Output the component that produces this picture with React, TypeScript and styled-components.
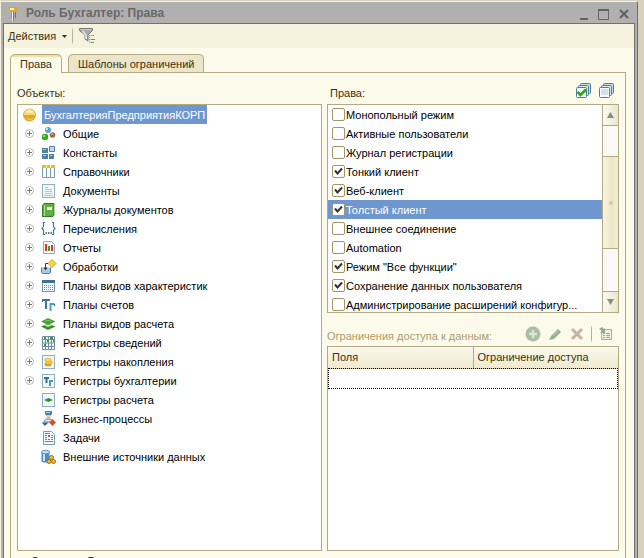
import React, { useState } from "react";
import styled, { createGlobalStyle, css } from "styled-components";

const line = "#b3aa83";
const cream = "#fcfaeb";
const ink = "#3f3109";
const highlight = "#6f97cf";

const GlobalStyle = createGlobalStyle`
  *, *::before, *::after { box-sizing: border-box; }
  body {
    margin: 0;
    background: #d8d1bd;
    font-family: "Liberation Sans", Arial, sans-serif;
    font-size: 11px;
    line-height: 13px;
    color: ${ink};
  }
  button, input { font: inherit; color: inherit; margin: 0; }
`;

const Desktop = styled.div`
  height: 100vh;
  overflow: hidden;
  display: flex;
  padding: 1px 6px 0 0;
  border-left: 1px solid #f3f0df;
`;

const Window = styled.main`
  flex: 1;
  min-width: 0;
  display: flex;
  flex-direction: column;
  background: #b0b0b0;
  border-top: 1px solid #f6f3e6;
  border-right: 1px solid #6d6d6d;
  padding: 0 2px;
`;

const TitleBar = styled.header`
  flex: none;
  height: 21px;
  display: flex;
  align-items: center;
  gap: 4px;
  padding: 2px 0 0 3px;
`;

const Title = styled.h1`
  flex: 1;
  margin: 0;
  font-size: 12px;
  line-height: 15px;
  font-weight: bold;
  color: #686868;
`;

const IconButton = styled.button`
  display: flex;
  align-items: center;
  justify-content: center;
  width: 16px;
  height: 16px;
  padding: 0;
  border: 0;
  background: none;
`;

const WindowControls = styled.div`
  display: flex;
  gap: 4px;
  padding-right: 3px;
`;

const Client = styled.div`
  flex: 1;
  min-height: 0;
  display: flex;
  flex-direction: column;
  background: ${cream};
  border: 1px solid #707070;
  border-bottom: 0;
`;

const Toolbar = styled.div`
  flex: none;
  height: 24px;
  display: flex;
  align-items: center;
  background: #f5f2de;
  padding-left: 4px;
`;

const MenuButton = styled.button`
  display: flex;
  align-items: center;
  gap: 6px;
  padding: 0;
  border: 0;
  background: none;
`;

const Divider = styled.span`
  width: 1px;
  height: 18px;
  background: linear-gradient(transparent, #b9b18c 20% 80%, transparent);
`;

const ToolbarDivider = styled(Divider)`
  margin: 0 6px 0 5px;
`;

const Tabs = styled.div`
  flex: none;
  display: flex;
  align-items: flex-end;
  gap: 6px;
  padding: 6px 7px 0 6px;
`;

const Tab = styled.button<{ $active: boolean }>`
  height: 18px;
  padding: 1px 9px 0;
  border: 1px solid ${line};
  border-bottom: 0;
  border-radius: 5px 5px 0 0;
  background: #ebe5cc;
  ${(p) =>
    p.$active &&
    css`
      height: 19px;
      margin-bottom: -1px;
      background: linear-gradient(#f8dda4 0 2px, ${cream} 2px);
      position: relative;
    `}
`;

const Panel = styled.section`
  flex: 1;
  min-height: 0;
  display: flex;
  flex-direction: column;
  margin: 0 8px 0 6px;
  padding: 9px 6px 0;
  border: 1px solid ${line};
  border-bottom: 0;
`;

const Columns = styled.div`
  flex: 1;
  min-height: 0;
  display: grid;
  grid-template-columns: 305fr 292fr;
  gap: 5px;
`;

const Column = styled.div`
  display: flex;
  flex-direction: column;
  min-width: 0;
  min-height: 0;
`;

const CaptionRow = styled.div`
  flex: none;
  height: 22px;
  display: flex;
  align-items: center;
  justify-content: space-between;
`;

const Caption = styled.h2<{ $muted?: boolean; $inset?: boolean }>`
  margin: 0;
  font-size: 11px;
  line-height: 13px;
  font-weight: normal;
  padding-left: ${(p) => (p.$inset ? "3px" : "0")};
  color: ${(p) => (p.$muted ? "#ae9b68" : ink)};
`;

const CaptionTools = styled.div`
  display: flex;
  gap: 7px;
  align-items: center;
  padding: 0 5px 4px 0;
`;

const Box = styled.div`
  flex: 1;
  min-height: 0;
  overflow: hidden;
  background: #fff;
  border: 1px solid ${line};
`;

const Tree = styled.ul`
  list-style: none;
  margin: 0;
  padding: 0;
  color: #000;
`;

const TreeRow = styled.li<{ $root?: boolean }>`
  height: 19px;
  display: flex;
  align-items: center;
  padding-left: ${(p) => (p.$root ? "4px" : "7px")};
`;

const Toggle = styled.button`
  width: 9px;
  height: 9px;
  margin-right: 7px;
  padding: 0;
  border: 0;
  background: none;
  display: flex;
`;

const ToggleGap = styled.span`
  width: 16px;
`;

const TreeLabel = styled.span<{ $selected?: boolean }>`
  display: flex;
  align-items: center;
  height: 19px;
  padding: 1px 2px 0;
  margin-left: 4px;
  color: ${(p) => (p.$selected ? "#fff" : "#000")};
  background: ${(p) => (p.$selected ? highlight : "transparent")};
`;

const RightsBox = styled(Box)`
  flex: none;
  height: 209px;
  display: flex;
`;

const RightsList = styled.ul`
  flex: 1;
  min-width: 0;
  list-style: none;
  margin: 0;
  padding: 0;
`;

const RightRow = styled.li<{ $selected: boolean }>`
  height: 19px;
  padding-left: 4px;
  color: ${(p) => (p.$selected ? "#fff" : "#000")};
  background: ${(p) => (p.$selected ? highlight : "transparent")};
`;

const RightLabel = styled.label`
  display: flex;
  align-items: center;
  height: 19px;
  gap: 1px;
`;

const RightName = styled.span`
  padding-top: 1px;
`;

const CheckWrap = styled.span`
  position: relative;
  width: 13px;
  height: 13px;
  display: flex;
`;

const CheckInput = styled.input`
  appearance: none;
  width: 13px;
  height: 13px;
  border: 1px solid #a0966c;
  border-radius: 2px;
  background: #fff;
  & + svg { display: none; }
  &:checked + svg { display: block; }
`;

const CheckMark = styled.svg`
  position: absolute;
  inset: 0;
  pointer-events: none;
`;

const ScrollBar = styled.div`
  width: 16px;
  display: flex;
  flex-direction: column;
  border-left: 1px solid ${line};
  background: #faf9f5;
`;

const ScrollButton = styled.button`
  flex: none;
  height: 20px;
  padding: 0;
  border: 0;
  display: flex;
  align-items: center;
  justify-content: center;
  background: linear-gradient(90deg, #fbfaf0, #ebe6cd);
`;

const ScrollTrack = styled.div`
  flex: 1;
  display: grid;
  grid-template-rows: 30fr 94fr 42fr;
  border: solid ${line};
  border-width: 1px 0;
`;

const ScrollThumb = styled.div`
  grid-row: 2;
  display: flex;
  align-items: center;
  justify-content: center;
  border: solid ${line};
  border-width: 1px 0;
  background: linear-gradient(90deg, #f7f4e2, #ebe5c6 60%, #f1edda);
`;

const Grip = styled.span`
  width: 4px;
  height: 4px;
  border-radius: 2px;
  background: #d5cda8;
`;

const LimitsHeader = styled.div`
  flex: none;
  height: 33px;
  display: flex;
  align-items: center;
  justify-content: space-between;
  padding-top: 14px;
`;

const LimitsTools = styled.div`
  display: flex;
  align-items: center;
  gap: 6px;
  padding: 0 5px 6px 0;
`;

const LimitsTable = styled.table`
  width: 100%;
  table-layout: fixed;
  border-collapse: collapse;
  th {
    height: 21px;
    padding: 0 4px;
    text-align: left;
    font-weight: normal;
    background: linear-gradient(#faf8ec, #f0ead0);
    border-bottom: 1px solid #d8d0ac;
  }
  th + th { border-left: 1px solid ${line}; }
  td {
    height: 21px;
    padding: 0;
    outline: 1px dotted #000;
    outline-offset: -1px;
  }
`;

const Footer = styled.h2`
  flex: none;
  height: 7px;
  margin: 0;
  padding: 4px 0 0 14px;
  font-size: 11px;
  line-height: 13px;
  overflow: hidden;
`;

const Svg = ({ size = 16, children }: { size?: number; children: React.ReactNode }) => (
  <svg width={size} height={size} viewBox={`0 0 ${size} ${size}`} fill="none" aria-hidden="true">
    {children}
  </svg>
);

const KeyIcon = () => (
  <Svg>
    <path d="M3 1h8l1 1-1 3-2 1H5L3 5 2 2z" fill="#dda92c" />
    <path d="M4 2h4v2H4z" fill="#fff0a8" />
    <path d="M6.500 6v9" stroke="#f0f0f0" />
    <path d="M7.500 6v9M9.500 6v6" stroke="#777" />
    <path d="M5.500 6v6" stroke="#999" />
  </Svg>
);

const FilterIcon = () => (
  <Svg>
    <path d="M.5.500h13v2L9 7v6l-3-2V7L.5 2.500z" fill="#a8a8a8" stroke="#777" />
    <path d="M1.500 1.500h11" stroke="#c8c8c8" />
    <path d="M3.500 3 7 7v4" stroke="#eee" strokeWidth="1.500" />
    <path d="M10.500 7v8M10.500 7.500h2M10.500 11.500h2M10.500 14.500h2" stroke="#aa9f78" strokeDasharray="1 1" />
    <path d="M12 7.500h3" stroke="#c0a24b" />
    <path d="M12 11.500h4" stroke="#458cc4" />
    <path d="M12 14.500h3" stroke="#55a64a" />
  </Svg>
);

const Stack = ({ checked }: { checked?: boolean }) => (
  <Svg>
    <rect x="5.500" y=".5" width="10" height="10" rx="1" fill="#c5dbe8" stroke="#527f9d" />
    <rect x="3.500" y="2.500" width="10" height="10" rx="1" fill="#d4e4ee" stroke="#527f9d" />
    <rect x="1.500" y="4.500" width="10" height="10" rx="1" fill={checked ? "#eff7ec" : "#f8fbfd"} stroke="#527f9d" />
    {checked ? (
      <path d="m2.500 9 3 3L11 6.500" stroke="#34a01c" strokeWidth="2.600" />
    ) : (
      <path d="M3 6h7v6H3z" fill="#d2e2ed" />
    )}
  </Svg>
);

const PlusIcon = () => (
  <Svg size={9}>
    <circle cx="4.500" cy="4.500" r="4" fill="#fff" stroke="#b8b8b8" />
    <path d="M2 4.500h5M4.500 2v5" stroke="#777" />
  </Svg>
);

const sheet = <rect x="1.500" y="1.500" width="12" height="13" fill="#f2f7fa" stroke="#91afc1" />;

const icons: Record<string, React.ReactNode> = {
  root: (
    <>
      <circle cx="7.500" cy="8" r="6.500" fill="#e9b22b" />
      <path d="M1.500 8a6 6 0 0 0 12 0z" fill="#e2a827" />
      <path d="M2.500 10c2 4 8 4 10 0-2 2-8 2-10 0z" fill="#f3c95a" />
      <path d="M2 8c0-8 11-8 11 0z" fill="#f8d878" />
      <path d="M4 5.500c1-3 6-3 7 0z" fill="#fff4c8" />
    </>
  ),
  common: (
    <>
      <circle cx="7" cy="4" r="3" fill="#5ba0d8" />
      <circle cx="6" cy="3" r="1.200" fill="#c0e0f7" />
      <circle cx="4" cy="11" r="3.200" fill="#38a51c" />
      <circle cx="3.200" cy="10" r="1.200" fill="#96dd78" />
      <circle cx="11.500" cy="9" r="2.800" fill="#a06a46" />
      <circle cx="11" cy="8" r="1" fill="#ddb293" />
    </>
  ),
  constants: (
    <>
      <path d="M1 3h6v5H1zM1 9h6v5H1zM8 9h5v5H8z" fill="#4f82a6" />
      <path d="M8.500 1.500h5v5h-5z" fill="#bcd9ea" stroke="#4f82a6" />
      <path d="M2 4h3v1H2zM2 10h3v1H2zM9 10h2v1H9z" fill="#a9cbe0" />
    </>
  ),
  catalogs: (
    <>
      <path d="M1.500 2.500h12v11h-12zM5.500 2v12M9.500 2v12" fill="#f7fafb" stroke="#7f9cae" />
      <path d="M1 1h13v3H1z" fill="#efbd18" />
      <path d="M5.500 1v3M9.500 1v3" stroke="#fff1b0" />
    </>
  ),
  documents: (
    <>
      {sheet}
      <path d="M4 4.500h3M4 6.500h7M4 8.500h7M4 10.500h7M3 12.500h9" stroke="#afc6d3" />
    </>
  ),
  journals: (
    <>
      <path d="M1.500 3.500 3 1.500h10v11l-1 2H1.500z" fill="#65ad43" stroke="#2f7c26" />
      <path d="M3.500 3v11" stroke="#a9df89" />
      <path d="M6 5h5v3H6z" fill="#e7f4dc" />
      <path d="M13.500 3v9" stroke="#b7d9a8" />
    </>
  ),
  enums: (
    <>
      <path d="M4 1.500H2.500v4L1 7.500 2.500 9v4.500H4M11 1.500h1.500v4L14 7.500 12.500 9v4.500H11" stroke="#4b7890" strokeWidth="1.200" />
      <path d="M4.500 12H6M7 12h1.500M9.500 12H11" stroke="#2e566d" strokeWidth="1.400" />
    </>
  ),
  reports: (
    <>
      <path d="M2.500 1.500h8l3 3v9h-11z" fill="#f3f8fb" stroke="#91afc1" />
      <path d="M4 4h2v7H4z" fill="#d3382c" />
      <path d="M7 6h2v5H7z" fill="#459b36" />
      <path d="M10 5h2v6h-2z" fill="#d3382c" />
    </>
  ),
  processing: (
    <>
      <path d="M.5 8.500v5l1 1h7l1-1v-5" fill="#a9cce2" stroke="#4581a8" />
      <path d="m11 .5 4 4-4 4-4-4z" fill="#f9d548" stroke="#d4a21a" />
      <path d="M7 4.500H4.500V9" stroke="#333" />
      <path d="M2.500 8.500h4l-2 3z" fill="#333" />
    </>
  ),
  characteristics: (
    <>
      <rect x="1.500" y="2.500" width="12" height="11" fill="#f0f6f9" stroke="#7797ac" />
      <path d="M1 2h13v3H1z" fill="#3f7290" />
      <path d="M3 7.500h9M3 9.500h9M3 11.500h9" stroke="#7594a8" strokeDasharray="1 1" />
    </>
  ),
  accounts: (
    <>
      <path d="M1 3h8M5 3v9" stroke="#3979a6" strokeWidth="2" />
      <path d="M9.500 14V7h4" stroke="#5b9ac2" strokeWidth="2" />
      <path d="M1.500 3v2M13.500 7v2" stroke="#3979a6" />
    </>
  ),
  calculation: (
    <>
      <path d="m0 10.500 7-3 7.500 3L7 14z" fill="#3c8b2d" />
      <path d="M2 8.500h10L7 11z" fill="#d7ebc9" />
      <path d="m0 5.500 7-3.500 7.500 3.500L7 9z" fill="#49a036" />
      <path d="m3 5.300 4-2 4 2z" fill="#70bd57" />
    </>
  ),
  info: (
    <>
      <path d="M1.500 1.500h12v13h-12zM1 4.500h13M1 8h13M1 11.500h13M4.500 2v13M7.500 2v13M10.500 2v13" fill="#f4f8fa" stroke="#6f92a7" />
      <path d="M3 2h2v2H3zM9 2h3v2H9zM6 5h2v2H6zM12 5h1v2h-1zM3 9h2v2H3z" fill="#429632" />
    </>
  ),
  accumulation: (
    <>
      {sheet}
      <ellipse cx="7" cy="10.500" rx="3.500" ry="1.800" fill="#df981a" />
      <ellipse cx="8" cy="8.500" rx="3.500" ry="1.800" fill="#f8cc3b" stroke="#d99a24" strokeWidth=".6" />
      <ellipse cx="7" cy="6" rx="3.500" ry="1.800" fill="#fbda60" stroke="#d99a24" strokeWidth=".6" />
    </>
  ),
  accounting: (
    <>
      {sheet}
      <path d="M3 5h5M5.500 5v5" stroke="#316e9a" strokeWidth="2" />
      <path d="M9 13V8h3" stroke="#5995bc" strokeWidth="2" />
    </>
  ),
  calcRegister: (
    <>
      {sheet}
      <path d="m3 8 4.500-2L12 8l-4.500 2z" fill="#398b29" />
    </>
  ),
  business: (
    <>
      <path d="M4 0h7v3L9 5H6L4 3z" fill="#3e83b5" />
      <path d="M5 1h4v1H5z" fill="#b8dbef" />
      <circle cx="7.500" cy="6" r="2.200" fill="#f0c594" />
      <path d="M3 11c0-4 9-4 9 0z" fill="#dbe7ee" stroke="#6d899b" />
      <path d="M.5 11.500h7L4 15z" fill="#436781" />
      <path d="m11.500 8 3.500 3.500-3.500 3.500L8 11.500z" fill="#e04f2e" />
    </>
  ),
  tasks: (
    <>
      <path d="M2.500 1.500h8l3 3v10h-11z" fill="#f5f8fa" stroke="#7d99aa" />
      <path d="M4 3.500h5M4 5.500h2M10 5.500h2M4 7.500h2M10 7.500h2M4 9.500h2M10 9.500h2M4 11.500h8" stroke="#67889e" />
      <path d="M7 5h2v2H7zM7 9h2v1H7z" fill="#bf5b4e" />
    </>
  ),
  external: (
    <>
      <path d="M.5 3v9c0 2 8 2 8 0V3z" fill="#4f8fbb" />
      <path d="M2 3h2v9H2z" fill="#c8e3f3" />
      <ellipse cx="4.500" cy="3" rx="4" ry="1.800" fill="#c4dfef" stroke="#5792b8" />
      <g fill="#f2bd2d" stroke="#a16b12">
        <circle cx="10.500" cy="8.500" r="2" />
        <circle cx="8" cy="12.500" r="2" />
        <circle cx="12.500" cy="12.500" r="2" />
      </g>
    </>
  ),
};

const branches: [string, string, boolean][] = [
  ["Общие", "common", true],
  ["Константы", "constants", true],
  ["Справочники", "catalogs", true],
  ["Документы", "documents", true],
  ["Журналы документов", "journals", true],
  ["Перечисления", "enums", true],
  ["Отчеты", "reports", true],
  ["Обработки", "processing", true],
  ["Планы видов характеристик", "characteristics", true],
  ["Планы счетов", "accounts", true],
  ["Планы видов расчета", "calculation", true],
  ["Регистры сведений", "info", true],
  ["Регистры накопления", "accumulation", true],
  ["Регистры бухгалтерии", "accounting", true],
  ["Регистры расчета", "calcRegister", false],
  ["Бизнес-процессы", "business", false],
  ["Задачи", "tasks", false],
  ["Внешние источники данных", "external", false],
];

const rights: [string, boolean][] = [
  ["Монопольный режим", false],
  ["Активные пользователи", false],
  ["Журнал регистрации", false],
  ["Тонкий клиент", true],
  ["Веб-клиент", true],
  ["Толстый клиент", true],
  ["Внешнее соединение", false],
  ["Automation", false],
  ['Режим "Все функции"', true],
  ["Сохранение данных пользователя", true],
  ["Администрирование расширений конфигур...", false],
];

export default function App() {
  const [tab, setTab] = useState(0);
  const [selected, setSelected] = useState(5);

  return (
    <Desktop>
      <GlobalStyle />
      <Window>
        <TitleBar>
          <KeyIcon />
          <Title>Роль Бухгалтер: Права</Title>
          <WindowControls>
            <IconButton aria-label="Свернуть">
              <Svg><path d="M4 13h8" stroke="#646464" strokeWidth="2" /></Svg>
            </IconButton>
            <IconButton aria-label="Развернуть">
              <Svg><path d="M2.500 3v10.500h10V3" stroke="#646464" /><path d="M2 4h11" stroke="#646464" strokeWidth="2" /></Svg>
            </IconButton>
            <IconButton aria-label="Закрыть">
              <Svg><path d="m4 4 8 8m0-8-8 8" stroke="#646464" strokeWidth="2.200" /></Svg>
            </IconButton>
          </WindowControls>
        </TitleBar>
        <Client>
          <Toolbar>
            <MenuButton>
              Действия
              <svg width="5" height="3" viewBox="0 0 5 3" aria-hidden="true"><path d="M0 0h5L2.500 3z" fill={ink} /></svg>
            </MenuButton>
            <ToolbarDivider />
            <IconButton aria-label="Отбор"><FilterIcon /></IconButton>
          </Toolbar>
          <Tabs role="tablist">
            {["Права", "Шаблоны ограничений"].map((name, i) => (
              <Tab key={name} role="tab" aria-selected={tab === i} $active={tab === i} onClick={() => setTab(i)}>
                {name}
              </Tab>
            ))}
          </Tabs>
          <Panel role="tabpanel">
            <Columns>
              <Column>
                <CaptionRow><Caption>Объекты:</Caption></CaptionRow>
                <Box>
                  <Tree>
                    <TreeRow $root>
                      <Svg>{icons.root}</Svg>
                      <TreeLabel $selected>БухгалтерияПредприятияКОРП</TreeLabel>
                    </TreeRow>
                    {branches.map(([name, icon, expandable]) => (
                      <TreeRow key={name}>
                        {expandable ? <Toggle aria-label={`Развернуть: ${name}`}><PlusIcon /></Toggle> : <ToggleGap />}
                        <Svg>{icons[icon]}</Svg>
                        <TreeLabel>{name}</TreeLabel>
                      </TreeRow>
                    ))}
                  </Tree>
                </Box>
              </Column>
              <Column>
                <CaptionRow>
                  <Caption $inset>Права:</Caption>
                  <CaptionTools>
                    <IconButton aria-label="Отметить все"><Stack checked /></IconButton>
                    <IconButton aria-label="Снять все отметки"><Stack /></IconButton>
                  </CaptionTools>
                </CaptionRow>
                <RightsBox>
                  <RightsList>
                    {rights.map(([name, on], i) => (
                      <RightRow key={name} $selected={selected === i} onClick={() => setSelected(i)}>
                        <RightLabel>
                          <CheckWrap>
                            <CheckInput type="checkbox" defaultChecked={on} />
                            <CheckMark width="13" height="13" viewBox="0 0 13 13" fill="none">
                              <path d="m3 5.500 2.500 3 4.500-5" stroke="#333" strokeWidth="2" />
                            </CheckMark>
                          </CheckWrap>
                          <RightName>{name}</RightName>
                        </RightLabel>
                      </RightRow>
                    ))}
                  </RightsList>
                  <ScrollBar>
                    <ScrollButton aria-label="Вверх">
                      <svg width="7" height="6" viewBox="0 0 7 6"><path d="M0 6h7L3.500 0z" fill="#8c8c84" /></svg>
                    </ScrollButton>
                    <ScrollTrack><ScrollThumb><Grip /></ScrollThumb></ScrollTrack>
                    <ScrollButton aria-label="Вниз">
                      <svg width="7" height="6" viewBox="0 0 7 6"><path d="M0 0h7L3.500 6z" fill="#8c8c84" /></svg>
                    </ScrollButton>
                  </ScrollBar>
                </RightsBox>
                <LimitsHeader>
                  <Caption $muted>Ограничения доступа к данным:</Caption>
                  <LimitsTools>
                    <IconButton aria-label="Добавить" disabled>
                      <Svg><circle cx="8" cy="8" r="7.500" fill="#a9bea3" /><path d="M4 8h8M8 4v8" stroke="#dbe5d2" strokeWidth="2.500" /></Svg>
                    </IconButton>
                    <IconButton aria-label="Изменить" disabled>
                      <Svg><path d="m4 10 7-7 3 3-7 7-5 1z" fill="#96b096" /><path d="m6 10 5-5" stroke="#bdcdb7" /></Svg>
                    </IconButton>
                    <IconButton aria-label="Удалить" disabled>
                      <Svg><path d="m3 3 10 10m0-10L3 13" stroke="#ccb0a8" strokeWidth="3" /></Svg>
                    </IconButton>
                    <Divider />
                    <IconButton aria-label="Заполнить" disabled>
                      <Svg>
                        <path d="M3.500 3.500h10v10h-10z" fill="#f0f0df" stroke="#a9ad9a" />
                        <path d="M5 7.500h2M8 7.500h4M5 9.500h2M8 9.500h4M5 11.500h2M8 11.500h4" stroke="#9fa791" />
                        <path d="m1 3 3-2 2 2 1-1v5H2l2-2z" fill="#8fab90" />
                      </Svg>
                    </IconButton>
                  </LimitsTools>
                </LimitsHeader>
                <Box>
                  <LimitsTable>
                    <colgroup><col /><col /></colgroup>
                    <thead><tr><th scope="col">Поля</th><th scope="col">Ограничение доступа</th></tr></thead>
                    <tbody><tr><td colSpan={2} /></tr></tbody>
                  </LimitsTable>
                </Box>
              </Column>
            </Columns>
            <Footer>Сведения Роли</Footer>
          </Panel>
        </Client>
      </Window>
    </Desktop>
  );
}
